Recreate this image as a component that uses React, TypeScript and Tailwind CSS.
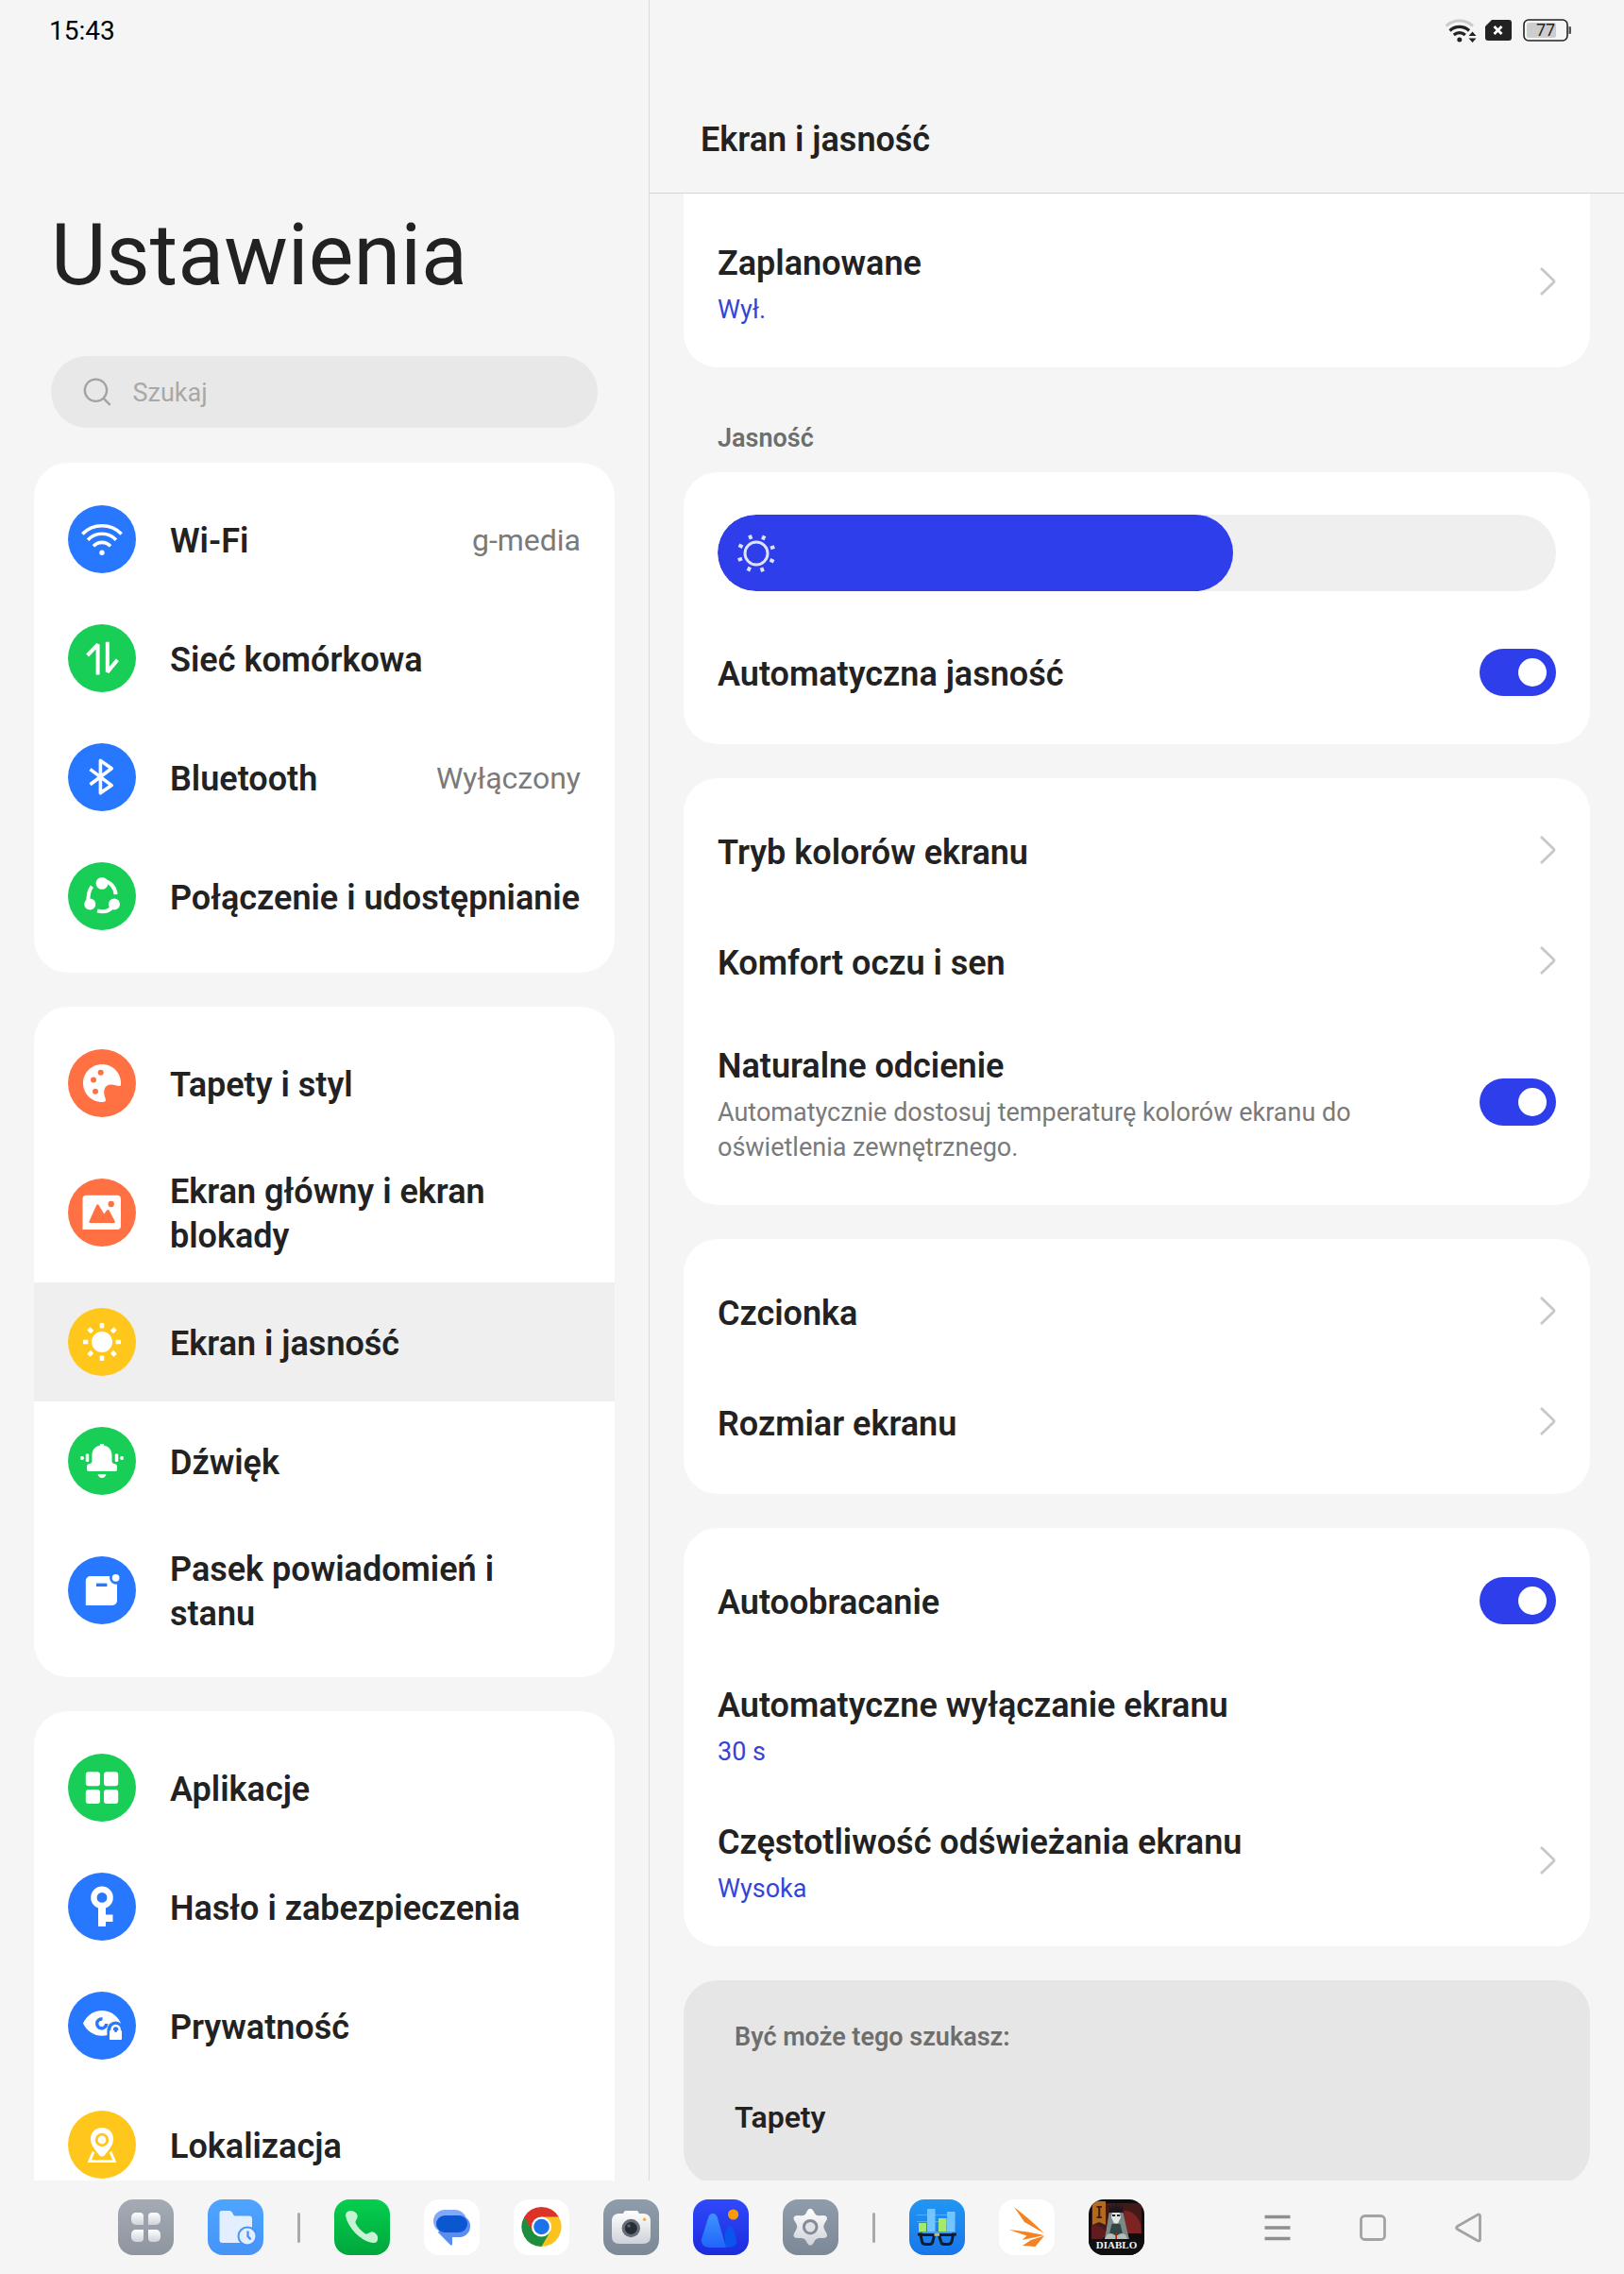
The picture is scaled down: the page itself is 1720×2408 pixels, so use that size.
import { useState } from 'react';
import type { ReactNode } from 'react';

/* ---------- Menu icons, all on a 72x72 disc ---------- */

const WifiGlyph = () => (
  <g fill="none" stroke="#fff" strokeWidth="3.6">
    <path d="M15.3 30.4a29 29 0 0 1 41.4 0" />
    <path d="M21 36.8a20.6 20.6 0 0 1 30 0" />
    <path d="M27 43.4a12 12 0 0 1 18 0" />
    <circle cx="36" cy="50.3" r="2.7" fill="#fff" stroke="none" />
  </g>
);

const DataGlyph = () => (
  <g fill="none" stroke="#fff" strokeWidth="4">
    <path d="M20.6 33 31.6 21.4V53.4" strokeLinejoin="bevel" />
    <path d="M41.8 18.8V50.6L52.4 37.8" strokeLinejoin="bevel" />
  </g>
);

const BluetoothGlyph = () => (
  <path
    d="M23.5 27.6 46.2 44.6 34.4 52.8V18.4L46.2 26.8 23.5 43.8"
    fill="none"
    stroke="#fff"
    strokeWidth="3.6"
    strokeLinejoin="round"
  />
);

const ShareGlyph = () => (
  <g fill="#fff">
    <circle cx="36" cy="22.4" r="6.4" />
    <circle cx="23.3" cy="44.4" r="6" />
    <circle cx="49" cy="44.4" r="6" />
    <g fill="none" stroke="#fff" strokeWidth="4">
      <path d="M25.4 25.6C22 30 21 35 21.4 43" />
      <path d="M38 19.6c7 1.4 12 7 12.6 14.6" />
      <path d="M31 51.4c7 2 12.6.6 17-5" />
    </g>
  </g>
);

const PaletteGlyph = () => (
  <>
    <path
      d="M36 16C25 16 16 25 16 36s9 20 20 20c3.4 0 4.600-1 3.600-4C36.400 44 39 37 46 37.500c4 .3 9.200 3 10 .5C57 26 48 16 36 16Z"
      fill="#fff"
    />
    <g fill="#ff7143">
      <circle cx="34.700" cy="24.700" r="3" />
      <circle cx="27" cy="32.600" r="3" />
      <circle cx="29" cy="44.700" r="3" />
    </g>
  </>
);

const PictureGlyph = () => (
  <>
    <path d="M19.500 17.700H52a4 4 0 0 1 4 4V50a4 4 0 0 1-4 4H15.500V21.700a4 4 0 0 1 4-4Z" fill="#fff" />
    <path
      d="M22.600 45 30 28.600q1.400-2.600 2.800 0l5.400 9 2.600-3.600q1.600-1.800 3 0L49.600 45q.9 2-1.200 2H24q-2.300 0-1.400-2Z"
      fill="#ff7143"
    />
    <circle cx="45.700" cy="27" r="3.200" fill="#ff7143" />
  </>
);

const SunGlyph = () => (
  <g fill="#fff">
    <circle cx="36" cy="36" r="11" />
    {[0, 45, 90, 135, 180, 225, 270, 315].map((deg) => (
      <rect key={deg} x="33.700" y="16" width="4.600" height="5.400" rx=".8" transform={`rotate(${deg} 36 36)`} />
    ))}
  </g>
);

const BellGlyph = () => (
  <g fill="#fff">
    <path d="M34 18h4v1.400c5 1 8.500 5 8.500 10.600v6.500q0 2.200 2.500 2.500 3 .4 3 3v3q0 2-2 2H22q-2 0-2-2v-3q0-2.600 3-3 2.400-.3 2.400-2.500V30c0-5.600 3.600-9.600 8.600-10.600Z" />
    <path d="M31.500 50h9q-1 4-4.500 4t-4.500-4Z" />
    <rect x="18.800" y="28.600" width="3.400" height="8.400" rx="1" />
    <rect x="49.800" y="28.600" width="3.400" height="8.400" rx="1" />
    <circle cx="15" cy="33" r="2" />
    <circle cx="57" cy="33" r="2" />
  </g>
);

const NoticeGlyph = () => (
  <>
    <path
      d="M23.800 21h20.400c-.8 5 2.600 9 7.800 8.600V47a5 5 0 0 1-5 5H18.800V26a5 5 0 0 1 5-5Z"
      fill="#fff"
    />
    <rect x="30" y="28.600" width="11.400" height="3.400" fill="#2878ff" />
    <circle cx="50.600" cy="22.800" r="3.900" fill="#fff" />
  </>
);

const AppsGlyph = () => (
  <g fill="#fff">
    <rect x="18.800" y="19.200" width="15.200" height="15" rx="3" />
    <rect x="38" y="19.200" width="15.200" height="15" rx="3" />
    <rect x="18.800" y="38" width="15.200" height="15" rx="3" />
    <rect x="38" y="38" width="15.200" height="15" rx="3" />
  </g>
);

const KeyGlyph = () => (
  <>
    <circle cx="36" cy="26.400" r="8.600" fill="none" stroke="#fff" strokeWidth="6.400" />
    <path d="M32 36h8v8.400h7.500V52H40v5h-8Z" fill="#fff" />
  </>
);

const PrivacyGlyph = () => (
  <>
    <path
      d="M16 33.500C20 25 27.500 20 36 20s16 5 20 13.500C52 42 44.500 46.800 36 46.800S20 42 16 33.500Z"
      fill="#fff"
    />
    <path d="M36.500 29a5 5 0 1 0 4.200 5" fill="none" stroke="#2878ff" strokeWidth="3.400" />
    <path d="M41.400 54V40.500a9 9 0 0 1 18 0V54Z" fill="#2878ff" />
    <rect x="44" y="41" width="13" height="10" rx="1" fill="#fff" />
    <path d="M46.600 42v-2a4 4 0 0 1 8 0v2" fill="none" stroke="#fff" strokeWidth="2.600" />
    <circle cx="50.600" cy="41.600" r="1.500" fill="#2878ff" />
  </>
);

const PinGlyph = () => (
  <>
    <path d="M27 43.600 22.800 53.600h26.400L45 43.600" fill="none" stroke="#fff" strokeWidth="2.800" />
    <path
      d="M36 18c-7 0-12 5.400-12 12 0 7 5 11.500 9 17q3 3 6 0c4-5.500 9-10 9-17 0-6.600-5-12-12-12Z"
      fill="#fff"
    />
    <circle cx="36" cy="31" r="5.800" fill="none" stroke="#ffc71c" strokeWidth="2.800" />
  </>
);

/* ---------- Data ---------- */

type MenuItem = {
  label: string;
  color: string;
  icon: ReactNode;
  value?: string;
};

const MENU: MenuItem[][] = [
  [
    { label: 'Wi-Fi', color: '#2878ff', icon: <WifiGlyph />, value: 'g-media' },
    { label: 'Sieć komórkowa', color: '#18ce57', icon: <DataGlyph /> },
    { label: 'Bluetooth', color: '#2878ff', icon: <BluetoothGlyph />, value: 'Wyłączony' },
    { label: 'Połączenie i udostępnianie', color: '#18ce57', icon: <ShareGlyph /> },
  ],
  [
    { label: 'Tapety i styl', color: '#ff7143', icon: <PaletteGlyph /> },
    { label: 'Ekran główny i ekran blokady', color: '#ff7143', icon: <PictureGlyph /> },
    { label: 'Ekran i jasność', color: '#ffc71c', icon: <SunGlyph /> },
    { label: 'Dźwięk', color: '#18ce57', icon: <BellGlyph /> },
    { label: 'Pasek powiadomień i stanu', color: '#2878ff', icon: <NoticeGlyph /> },
  ],
  [
    { label: 'Aplikacje', color: '#18ce57', icon: <AppsGlyph /> },
    { label: 'Hasło i zabezpieczenia', color: '#2878ff', icon: <KeyGlyph /> },
    { label: 'Prywatność', color: '#2878ff', icon: <PrivacyGlyph /> },
    { label: 'Lokalizacja', color: '#ffc71c', icon: <PinGlyph /> },
  ],
];

/* ---------- Status bar ---------- */

function StatusIcons() {
  return (
    <div className="flex items-center gap-[9px]">
      <svg width="34" height="26" viewBox="0 0 34 26" fill="none" aria-label="Wi-Fi">
        <path d="M1.500 8.500a21 21 0 0 1 28.500 0" stroke="#cbcbcb" strokeWidth="3" />
        <path d="M5.500 13.500a15 15 0 0 1 20.500 0" stroke="#222" strokeWidth="3.200" />
        <path d="M9.800 18a9 9 0 0 1 12 0" stroke="#222" strokeWidth="3.200" />
        <circle cx="15.800" cy="23" r="2.500" fill="#222" />
        <path d="M29.500 14.500l4 4.500h-8ZM29.500 26l4-4.500h-8Z" fill="#222" />
      </svg>
      <svg width="28" height="22" viewBox="0 0 28 22" aria-label="SIM">
        <path d="M7 0h18a3 3 0 0 1 3 3v16a3 3 0 0 1-3 3H3a3 3 0 0 1-3-3V7Z" fill="#222" />
        <path d="m9.500 7 8 8m0-8-8 8" stroke="#fff" strokeWidth="2.800" />
      </svg>
      <svg width="52" height="24" viewBox="0 0 52 24" className="ml-[3px]" aria-label="Bateria 77%">
        <rect x="1" y="1" width="46" height="22" rx="5" fill="none" stroke="#222" strokeWidth="1.600" />
        <rect x="4" y="4" width="31" height="16" rx="2.500" fill="#cdcdcd" />
        <path d="M48.500 8h1.200q1.300 0 1.300 1.300v5.400q0 1.300-1.300 1.300h-1.200Z" fill="#555" />
        <text x="24" y="18" textAnchor="middle" fontFamily="Roboto, sans-serif" fontSize="18" fill="#222">
          77
        </text>
      </svg>
    </div>
  );
}

/* ---------- Left pane ---------- */

function MenuCard({ items, active, onSelect }: { items: MenuItem[]; active: string; onSelect: (label: string) => void }) {
  return (
    <ul className="shrink-0 overflow-hidden rounded-[36px] bg-white py-[18px]">
      {items.map((item) => (
        <li key={item.label}>
          <a
            href="#"
            onClick={(e) => {
              e.preventDefault();
              onSelect(item.label);
            }}
            className={`flex min-h-[126px] items-center px-9 py-[25px] ${active === item.label ? 'bg-[#efefef]' : ''}`}
          >
            <svg width="72" height="72" viewBox="0 0 72 72" className="mr-9 shrink-0" aria-hidden="true">
              <circle cx="36" cy="36" r="36" fill={item.color} />
              {item.icon}
            </svg>
            <span className="flex-1 pt-[4px] text-[36px] leading-[47px] font-semibold">{item.label}</span>
            {item.value && <span className="pt-[2px] text-[32px] leading-[47px] text-[#7a7a7a]">{item.value}</span>}
          </a>
        </li>
      ))}
    </ul>
  );
}

/* ---------- Right pane ---------- */

function Card({ children }: { children: ReactNode }) {
  return <section className="mb-9 rounded-[36px] bg-white px-9 py-[18px]">{children}</section>;
}

function RowText({ title, value, note }: { title: string; value?: string; note?: string }) {
  return (
    <span className="flex flex-1 flex-col gap-[7px] pt-[6px] text-left">
      <span className="text-[36px] leading-[47px] font-semibold">{title}</span>
      {value && <span className="text-[27px] leading-[37px] text-[#3544d6]">{value}</span>}
      {note && <span className="text-[27px] leading-[37px] text-[#7a7a7a]">{note}</span>}
    </span>
  );
}

function LinkRow({ title, value, arrow = true }: { title: string; value?: string; arrow?: boolean }) {
  return (
    <button type="button" className="flex min-h-[117px] w-full items-center gap-9 py-6">
      <RowText title={title} value={value} />
      {arrow && (
        <svg width="18" height="32" viewBox="0 0 18 32" fill="none" aria-hidden="true">
          <path d="M2 1 15.500 14q1 1 0 2L2 29" stroke="#c8c8c8" strokeWidth="2.800" />
        </svg>
      )}
    </button>
  );
}

function SwitchRow({ title, note }: { title: string; note?: string }) {
  const [on, setOn] = useState(true);
  return (
    <label className="flex min-h-[117px] items-center gap-9 py-6">
      <RowText title={title} note={note} />
      <input
        type="checkbox"
        role="switch"
        checked={on}
        onChange={() => setOn(!on)}
        className="h-[50px] w-[81px] shrink-0 appearance-none rounded-full bg-[#d6d6d6] p-[10px] before:block before:size-[30px] before:rounded-full before:bg-white before:content-[''] checked:bg-[#2e3eea] checked:before:translate-x-[31px]"
      />
    </label>
  );
}

function BrightnessSlider() {
  const [level, setLevel] = useState(615);
  return (
    <div className="relative mt-[27px] mb-[27px] h-[81px] overflow-hidden rounded-full bg-[#efefef]">
      <div className="flex h-full items-center rounded-full bg-[#2e3eea] pl-[19px]" style={{ width: `${level / 10}%` }}>
        <svg width="44" height="44" viewBox="0 0 44 44" fill="none" stroke="#dfe2ff" strokeWidth="3" aria-hidden="true">
          <circle cx="22" cy="22" r="12" />
          {[25, 70, 115, 160, 205, 250, 295, 340].map((deg) => (
            <path key={deg} d="M22 1.500v4.500" strokeWidth="3.800" transform={`rotate(${deg} 22 22)`} />
          ))}
        </svg>
      </div>
      <input
        type="range"
        min="80"
        max="1000"
        value={level}
        aria-label="Jasność"
        onChange={(e) => setLevel(Number(e.target.value))}
        className="absolute inset-0 h-full w-full opacity-0"
      />
    </div>
  );
}

/* ---------- Dock ---------- */

function DockIcon({ label, children }: { label: string; children: ReactNode }) {
  return (
    <button type="button" aria-label={label}>
      <svg width="59" height="59" viewBox="0 0 59 59" className="overflow-hidden rounded-[16px]">
        {children}
      </svg>
    </button>
  );
}

function Divider() {
  return <span className="h-8 w-[3px] rounded-full bg-[#a9a9a9]" />;
}

function Dock() {
  return (
    <footer className="flex shrink-0 items-center justify-between py-5 pr-[151px] pl-[125px]">
      <svg width="0" height="0" className="absolute">
        <defs>
          <linearGradient id="slate" x1="0" y1="0" x2="0" y2="1">
            <stop offset="0" stopColor="#a4abb5" />
            <stop offset="1" stopColor="#8f959f" />
          </linearGradient>
          <linearGradient id="steel" x1="0" y1="0" x2="0" y2="1">
            <stop offset="0" stopColor="#8f9cab" />
            <stop offset="1" stopColor="#7c8896" />
          </linearGradient>
          <linearGradient id="silver" x1="0" y1="0" x2="0" y2="1">
            <stop offset="0" stopColor="#ffffff" />
            <stop offset="1" stopColor="#cfd2d8" />
          </linearGradient>
          <linearGradient id="sky" x1="0" y1="0" x2="0" y2="1">
            <stop offset="0" stopColor="#4da5ff" />
            <stop offset="1" stopColor="#4793f7" />
          </linearGradient>
          <linearGradient id="leaf" x1="0" y1="0" x2="0" y2="1">
            <stop offset="0" stopColor="#05cf4d" />
            <stop offset="1" stopColor="#00a63c" />
          </linearGradient>
          <linearGradient id="royal" x1="0" y1="0" x2="0" y2="1">
            <stop offset="0" stopColor="#2f49fb" />
            <stop offset="1" stopColor="#1b2cdc" />
          </linearGradient>
          <linearGradient id="peak" x1="0" y1="0" x2="0" y2="1">
            <stop offset="0" stopColor="#3f93ff" />
            <stop offset="1" stopColor="#1f66fa" />
          </linearGradient>
          <linearGradient id="azure" x1="0" y1="0" x2="0" y2="1">
            <stop offset="0" stopColor="#2196f3" />
            <stop offset="1" stopColor="#1976ea" />
          </linearGradient>
        </defs>
      </svg>

      <nav aria-label="Dok" className="flex items-center gap-9">
        <DockIcon label="Wszystkie aplikacje">
          <rect width="59" height="59" fill="url(#slate)" />
          <g fill="url(#silver)">
            <path d="M19 14h4a4 4 0 0 1 4 4v9h-8a5 5 0 0 1-5-5v-3a5 5 0 0 1 5-5Z" />
            <path d="M36 14h4a5 5 0 0 1 5 5v3a5 5 0 0 1-5 5h-8v-9a4 4 0 0 1 4-4Z" />
            <path d="M19 32h8v9a4 4 0 0 1-4 4h-4a5 5 0 0 1-5-5v-3a5 5 0 0 1 5-5Z" />
            <path d="M32 32h8a5 5 0 0 1 5 5v3a5 5 0 0 1-5 5h-4a4 4 0 0 1-4-4Z" />
          </g>
        </DockIcon>
        <DockIcon label="Ostatnie pliki">
          <rect width="59" height="59" fill="url(#sky)" />
          <path
            d="M15 12h8q2 0 3 2l1 2q.8 1.500 2.500 1.500H44a3 3 0 0 1 3 3V43a3 3 0 0 1-3 3H15.500a3 3 0 0 1-3-3V14.500Q12.500 12 15 12Z"
            fill="#e3effe"
          />
          <circle cx="42" cy="39" r="10.500" fill="#4793f7" />
          <circle cx="42" cy="39" r="8.500" fill="#e3effe" />
          <path d="M42.500 33.500V39l3 3.500" fill="none" stroke="#4793f7" strokeWidth="2.400" />
        </DockIcon>

        <Divider />

        <DockIcon label="Telefon">
          <rect width="59" height="59" fill="url(#leaf)" />
          <path
            d="M14 13c3-2 8-1 10 2.500 2.400 4.500-2.400 6.500-1.400 9.500 2 4.500 6 8.500 10.400 11.500 3 1 5-4 9-1.800 4 2.300 5 6 3.500 9.300-1 2.500-5 2.500-9 1C26 41.500 14.500 29 12.300 18.500c-.5-2.500 0-4.500 1.700-5.500Z"
            fill="#c6f3d3"
          />
        </DockIcon>
        <DockIcon label="Wiadomości">
          <rect width="59" height="59" fill="#fff" />
          <rect x="10" y="11" width="35" height="24" rx="12" fill="#83a9f6" />
          <path d="M25 17h13a11 11 0 0 1 11 11.500A11.500 11.500 0 0 1 38 40h-8v7q0 3-2.200 1L15 35Z" fill="#5a8df0" />
          <rect x="13" y="17" width="33" height="18" rx="9" fill="#0b57d0" />
        </DockIcon>
        <DockIcon label="Chrome">
          <rect width="59" height="59" fill="#fff" />
          <path d="M29.500 29 11.300 18.500A21 21 0 0 1 47.700 18.500Z" fill="#db3328" />
          <path d="M29.500 29 47.700 18.500A21 21 0 0 1 29.500 50Z" fill="#fcc31e" />
          <path d="M29.500 29V50A21 21 0 0 1 11.300 18.500Z" fill="#1e8e3e" />
          <path d="M11.300 18.500 20.400 34.300 29.500 18.500Z" fill="#db3328" />
          <path d="M29.500 18.500H47.700L38.600 34.300Z" fill="#fcc31e" />
          <path d="M38.600 34.300 29.500 50 20.400 34.300Z" fill="#1e8e3e" />
          <circle cx="29.500" cy="29" r="10.500" fill="#fff" />
          <circle cx="29.500" cy="29" r="8.300" fill="#1a73e8" />
        </DockIcon>
        <DockIcon label="Aparat">
          <rect width="59" height="59" fill="url(#steel)" />
          <path
            d="M24 12h11q2 0 2.500 2l.4 1H43q7 .5 7 8v16q0 8-8 8H17q-8 0-8-8V23q0-7.500 7-8h5l.5-1q.5-2 2.500-2Z"
            fill="url(#silver)"
          />
          <circle cx="29.300" cy="30.500" r="9.700" fill="#666d79" />
          <circle cx="29.300" cy="30.500" r="6.500" fill="#272c35" />
          <circle cx="27" cy="28" r="1.800" fill="#5a6270" />
          <circle cx="43.600" cy="21.300" r="1.700" fill="#f7b21a" />
        </DockIcon>
        <DockIcon label="Zdjęcia">
          <rect width="59" height="59" fill="url(#royal)" />
          <path d="M34 51 33.500 36q3-8 5.500-8.500 3 0 5 7l2 9q1 6-6 7Z" fill="#0b55ee" />
          <path d="M16.500 18q4.500-6.500 9 0L35 51H17q-9-1-8-9Z" fill="url(#peak)" />
          <circle cx="42.600" cy="16" r="5.600" fill="#f89a0c" />
        </DockIcon>
        <DockIcon label="Ustawienia">
          <rect width="59" height="59" fill="url(#steel)" />
          <path
            d="M26 12q3.200-4.500 6.400 0l1.600 3q1.500 2.500 4.500 2.300l5-.3q4.500.5 3.200 4.500l-2.700 4.500q-1.500 3 0 5.500l2.700 5q1.300 4-3.200 4.500h-5q-3 0-4.500 2.500l-1.600 3q-3.200 4.500-6.400 0l-1.500-3q-1.500-2.500-4.500-2.500h-5q-4.500-.5-3.200-4.500l2.700-5q1.500-2.500 0-5.500l-2.700-4.500q-1.300-4 3.200-4.500l5 .3q3 .2 4.500-2.300Z"
            fill="url(#silver)"
          />
          <circle cx="29.200" cy="29.200" r="6.800" fill="#dfe1e6" stroke="#858c98" strokeWidth="3" />
        </DockIcon>

        <Divider />

        <DockIcon label="Geekbench">
          <rect width="59" height="59" fill="url(#azure)" />
          <path d="M8 16.500h41M8 23.500h41" stroke="#4fb0fa" strokeWidth="1" />
          <rect x="10" y="25" width="8" height="12" fill="#a5e86b" />
          <rect x="19" y="10" width="8.500" height="27" fill="#72c5ff" />
          <rect x="31" y="20" width="8.500" height="17" fill="#a5e86b" />
          <rect x="40" y="13" width="8.500" height="24" fill="#72c5ff" />
          <path d="M9 34h40v3H9Z" fill="#3f9df2" />
          <g fill="none" stroke="#131c2d" strokeWidth="3">
            <path d="M12 37.500h14.500l-1.500 7q-.8 3-3.500 3H17q-3 0-3.500-3Z" />
            <path d="M31.500 37.500H46.500l-1.500 7q-.8 3-3.500 3H37q-3 0-3.500-3Z" />
            <path d="M9 37h5M45 37h5" />
          </g>
          <rect x="26.500" y="35.800" width="5.500" height="3" fill="#d2b370" />
        </DockIcon>
        <DockIcon label="3DMark">
          <rect width="59" height="59" fill="#fff" />
          <g fill="#f58220">
            <path d="M16 8 32 21q9 8 16 15L27 24Z" />
            <path d="m10.500 32 20 2.500L48 38l-23.500 5 5-4.500Z" />
            <path d="M34 43 48 38.500 38.500 50 25 49Z" />
          </g>
        </DockIcon>
        <DockIcon label="Diablo">
          <rect width="59" height="59" fill="#0e0d0f" />
          <path d="M3 4h53v32H3Z" fill="#43191a" />
          <path d="M37 12q12-1 18 14l1 10H40Z" fill="#7c2424" />
          <path d="M3 28q10-4 17 10l-6 4H3Z" fill="#611c1f" />
          <path d="M4 2h14v25l-7-3-7 3Z" fill="#b26a1c" />
          <path d="M8.500 7h5.500v1.800h-1.700v9.400H14V20H8.500v-1.800h1.700V8.800H8.500Z" fill="#4b1a0b" />
          <path d="M21 18q0-7 8-7.500 8 .5 8.500 7.500l2.500 12 3 12H17l2-12Z" fill="#7c8887" />
          <path d="M22 14 21.500 6l3 4 .5-5 2.500 4 1.500-6 1.500 6 2.500-4 .5 5 3-4-.5 8Z" fill="#1c191c" />
          <path d="M25 14h8l1 5-2.500 5.500q-2.500 2-5 0L24 19Z" fill="#e4e6e1" />
          <path d="M25 17h3.200M30 17h3.200" stroke="#1f2a2e" strokeWidth="2" />
          <path d="M24.500 26h9L37 41H21Z" fill="#2f4746" />
          <path d="M19 38q4-4 9 0h2.500q5-4 9 0l2 5h-25Z" fill="#b4bdb8" />
          <path d="M29.200 35v8" stroke="#9c2322" strokeWidth="1.600" />
          <path d="M0 42h59v17H0Z" fill="#101013" />
          <text
            x="29.500"
            y="52"
            textAnchor="middle"
            fontFamily="Liberation Serif, serif"
            fontSize="11"
            fontWeight="700"
            fill="#f1f1f1"
          >
            DIABLO
          </text>
        </DockIcon>
      </nav>

      <nav aria-label="Nawigacja" className="flex items-center gap-[73px]">
        <button type="button" aria-label="Ostatnie">
          <svg width="28" height="32" viewBox="0 0 28 32" stroke="#8f8f8f" strokeWidth="3.600">
            <path d="M.500 4.500h27M.500 16h27M.500 27.500h27" />
          </svg>
        </button>
        <button type="button" aria-label="Ekran główny">
          <svg width="28" height="32" viewBox="0 0 28 32" fill="none" stroke="#a3a3a3" strokeWidth="2.800">
            <rect x="1.500" y="3.500" width="25" height="25" rx="4" />
          </svg>
        </button>
        <button type="button" aria-label="Wstecz">
          <svg width="28" height="32" viewBox="0 0 28 32" fill="none" stroke="#a3a3a3" strokeWidth="2.800">
            <path d="M2.500 14.500 24 2.300q2.500-1 2.500 1.500v24.400q0 2.500-2.500 1.500L2.500 17.500q-2-1.500 0-3Z" />
          </svg>
        </button>
      </nav>
    </footer>
  );
}

export default function App() {
  const [active, setActive] = useState('Ekran i jasność');

  return (
    <div className="flex h-screen flex-col overflow-hidden bg-[#f5f5f5] font-[Roboto,sans-serif] text-[#222]">
      <div className="grid min-h-0 flex-1 grid-cols-[2fr_3fr]">
        {/* Settings menu */}
        <aside className="flex min-h-0 flex-col border-r border-[#dadada]">
          <div className="px-[54px] pt-4">
            <time className="-ml-[2px] block text-[28px] leading-[34px] text-black">15:43</time>
            <h1 className="mt-[168px] text-[90px] leading-[106px]">Ustawienia</h1>
            <label className="mt-[53px] flex h-[76px] items-center rounded-full bg-[#e8e8e8] pr-9 pl-[34px]">
              <svg width="34" height="34" viewBox="0 0 34 34" fill="none" stroke="#a3a3a3" strokeWidth="2.600" aria-hidden="true">
                <circle cx="15" cy="15" r="13" />
                <path d="m24.500 25 7.500 7.500" />
              </svg>
              <input
                type="text"
                aria-label="Szukaj"
                placeholder="Szukaj"
                className="ml-[22px] w-full bg-transparent pt-[2px] text-[27px] leading-8 outline-none placeholder:text-[#a8a8a8]"
              />
            </label>
          </div>
          <div className="mt-[37px] flex min-h-0 flex-1 flex-col gap-9 overflow-y-auto px-9 [scrollbar-width:none]">
            {MENU.map((items) => (
              <MenuCard key={items[0].label} items={items} active={active} onSelect={setActive} />
            ))}
          </div>
        </aside>

        {/* Display & brightness */}
        <main className="flex min-h-0 flex-col">
          <header className="border-b border-[#d4d4d4] pb-8">
            <div className="flex h-16 items-center justify-end pr-[55px]">
              <StatusIcons />
            </div>
            <h2 className="mt-[61px] px-[54px] text-[36px] leading-[47px] font-semibold">Ekran i jasność</h2>
          </header>

          <div className="min-h-0 flex-1 overflow-y-auto px-9 [scrollbar-width:none]">
            <section className="rounded-b-[36px] bg-white px-9 pt-[21px] pb-[18px]">
              <LinkRow title="Zaplanowane" value="Wył." />
            </section>

            <h3 className="px-9 pt-[57px] pb-[17px] text-[27px] leading-[37px] font-semibold text-[#6e6e6e]">Jasność</h3>
            <Card>
              <BrightnessSlider />
              <SwitchRow title="Automatyczna jasność" />
            </Card>

            <Card>
              <LinkRow title="Tryb kolorów ekranu" />
              <LinkRow title="Komfort oczu i sen" />
              <SwitchRow
                title="Naturalne odcienie"
                note="Automatycznie dostosuj temperaturę kolorów ekranu do oświetlenia zewnętrznego."
              />
            </Card>

            <Card>
              <LinkRow title="Czcionka" />
              <LinkRow title="Rozmiar ekranu" />
            </Card>

            <Card>
              <SwitchRow title="Autoobracanie" />
              <LinkRow title="Automatyczne wyłączanie ekranu" value="30 s" arrow={false} />
              <LinkRow title="Częstotliwość odświeżania ekranu" value="Wysoka" />
            </Card>

            <section className="rounded-[36px] bg-[#e6e6e6] px-[54px] pt-[42px] pb-[50px]">
              <h3 className="text-[27px] leading-[37px] font-semibold text-[#6e6e6e]">Być może tego szukasz:</h3>
              <a href="#" className="mt-[46px] block text-[32px] leading-[41px] font-semibold">
                Tapety
              </a>
            </section>
          </div>
        </main>
      </div>

      <Dock />
    </div>
  );
}
